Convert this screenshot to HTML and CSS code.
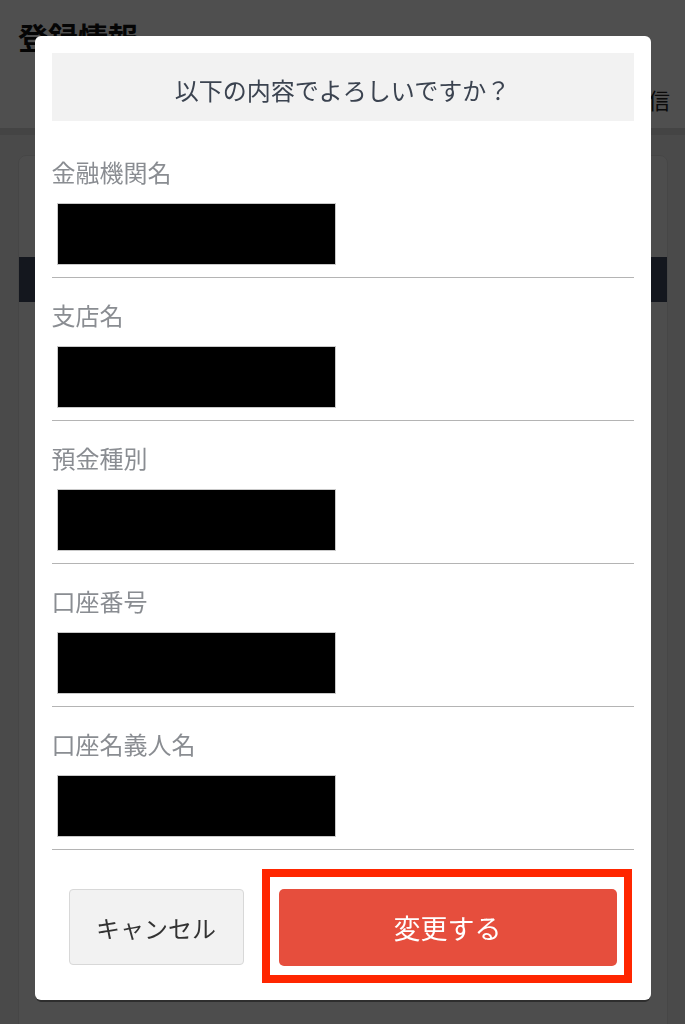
FILE: index.html
```html
<!DOCTYPE html>
<html lang="ja">
  <head>
    <meta charset="UTF-8" />
    <title>登録情報</title>
    <link rel="stylesheet" href="styles.css">
  </head>
  <body>
    <header class="page-header">
      <h1 class="page-title">登録情報</h1>
      <nav class="tabs">
        <div class="tab">受信</div>
      </nav>
    </header>
    <main class="page-main">
      <div class="card">
        <div class="card-top"></div>
        <div class="card-bar"></div>
        <div class="card-body"></div>
      </div>
    </main>

    <div class="overlay">
      <div class="modal">
        <div class="modal-head">以下の内容でよろしいですか？</div>
        <div class="fields">
          <div class="field">
            <div class="field-label">金融機関名</div>
            <div class="field-value"></div>
          </div>
          <div class="field">
            <div class="field-label">支店名</div>
            <div class="field-value"></div>
          </div>
          <div class="field">
            <div class="field-label">預金種別</div>
            <div class="field-value"></div>
          </div>
          <div class="field">
            <div class="field-label">口座番号</div>
            <div class="field-value"></div>
          </div>
          <div class="field">
            <div class="field-label">口座名義人名</div>
            <div class="field-value"></div>
          </div>
        </div>
        <div class="actions">
          <button class="btn-cancel">キャンセル</button>
          <div class="highlight">
            <button class="btn-submit">変更する</button>
          </div>
        </div>
      </div>
    </div>
  </body>
</html>
```

FILE: styles.css
```css
body {
  margin: 0;
  font-family: "Noto Sans CJK JP", "Noto Sans", sans-serif;
  background: #efefef;
  color: #333;
  height: 100vh;
  overflow: hidden;
}
button {
  font-family: inherit;
  cursor: pointer;
}

/* 背景のページ */
.page-header {
  background: #fff;
  height: 128px;
  border-bottom: 7px solid #dcdcdc;
  box-sizing: content-box;
}
.page-title {
  margin: 0;
  padding: 14px 0 0 18px;
  font-size: 30px;
  font-weight: 700;
  line-height: 44px;
  color: #111;
}
.tabs {
  display: flex;
  justify-content: flex-end;
  padding-right: 15px;
  margin-top: 24px;
}
.tab {
  font-size: 22px;
  line-height: 34px;
  color: #222;
}
.page-main {
  padding: 20px 17px 0 18px;
}
.card {
  background: #f9f9f9;
  border: 1px solid #e2e2e2;
  border-radius: 8px;
  height: 900px;
  overflow: hidden;
}
.card-top {
  height: 101px;
}
.card-bar {
  height: 45px;
  background: #434c62;
}

/* モーダル */
.overlay {
  position: fixed;
  inset: 0;
  background: rgba(0, 0, 0, 0.69);
  display: flex;
  justify-content: center;
  align-items: flex-start;
}
.modal {
  margin-top: 36px;
  width: 616px;
  box-sizing: border-box;
  background: #fff;
  border-radius: 6px;
  padding: 17px;
  box-shadow: 0 3px 0 -1px #2e2e2e;
}
.modal-head {
  background: #f2f2f2;
  height: 68px;
  box-sizing: border-box;
  padding-top: 19px;
  font-size: 24px;
  line-height: 36px;
  text-align: center;
  color: #3b4350;
}
.fields {
  margin-top: 14px;
}
.field {
  padding: 19px 0 12px;
  border-bottom: 1px solid #b4b4b4;
}
.field-label {
  font-size: 24px;
  line-height: 36px;
  color: #8a8d92;
}
.field-value {
  margin: 13px 0 0 5px;
  width: 279px;
  height: 62px;
  box-sizing: border-box;
  background: #000;
  border: 1px solid #c9c9c9;
}
.actions {
  display: flex;
  align-items: flex-start;
  gap: 18px;
  padding-left: 17px;
  margin-top: 19px;
}
.btn-cancel {
  margin-top: 20px;
  width: 175px;
  height: 76px;
  background: #f2f2f2;
  border: 1px solid #d8d8d8;
  border-radius: 4px;
  font-size: 24px;
  color: #333;
}
.highlight {
  width: 370px;
  box-sizing: border-box;
  border: 8px solid #ff2600;
  padding: 12px 7px 9px 9px;
}
.btn-submit {
  display: block;
  width: 100%;
  height: 77px;
  background: #e64e3d;
  border: none;
  border-radius: 5px;
  font-size: 27px;
  color: #fff;
}
```
